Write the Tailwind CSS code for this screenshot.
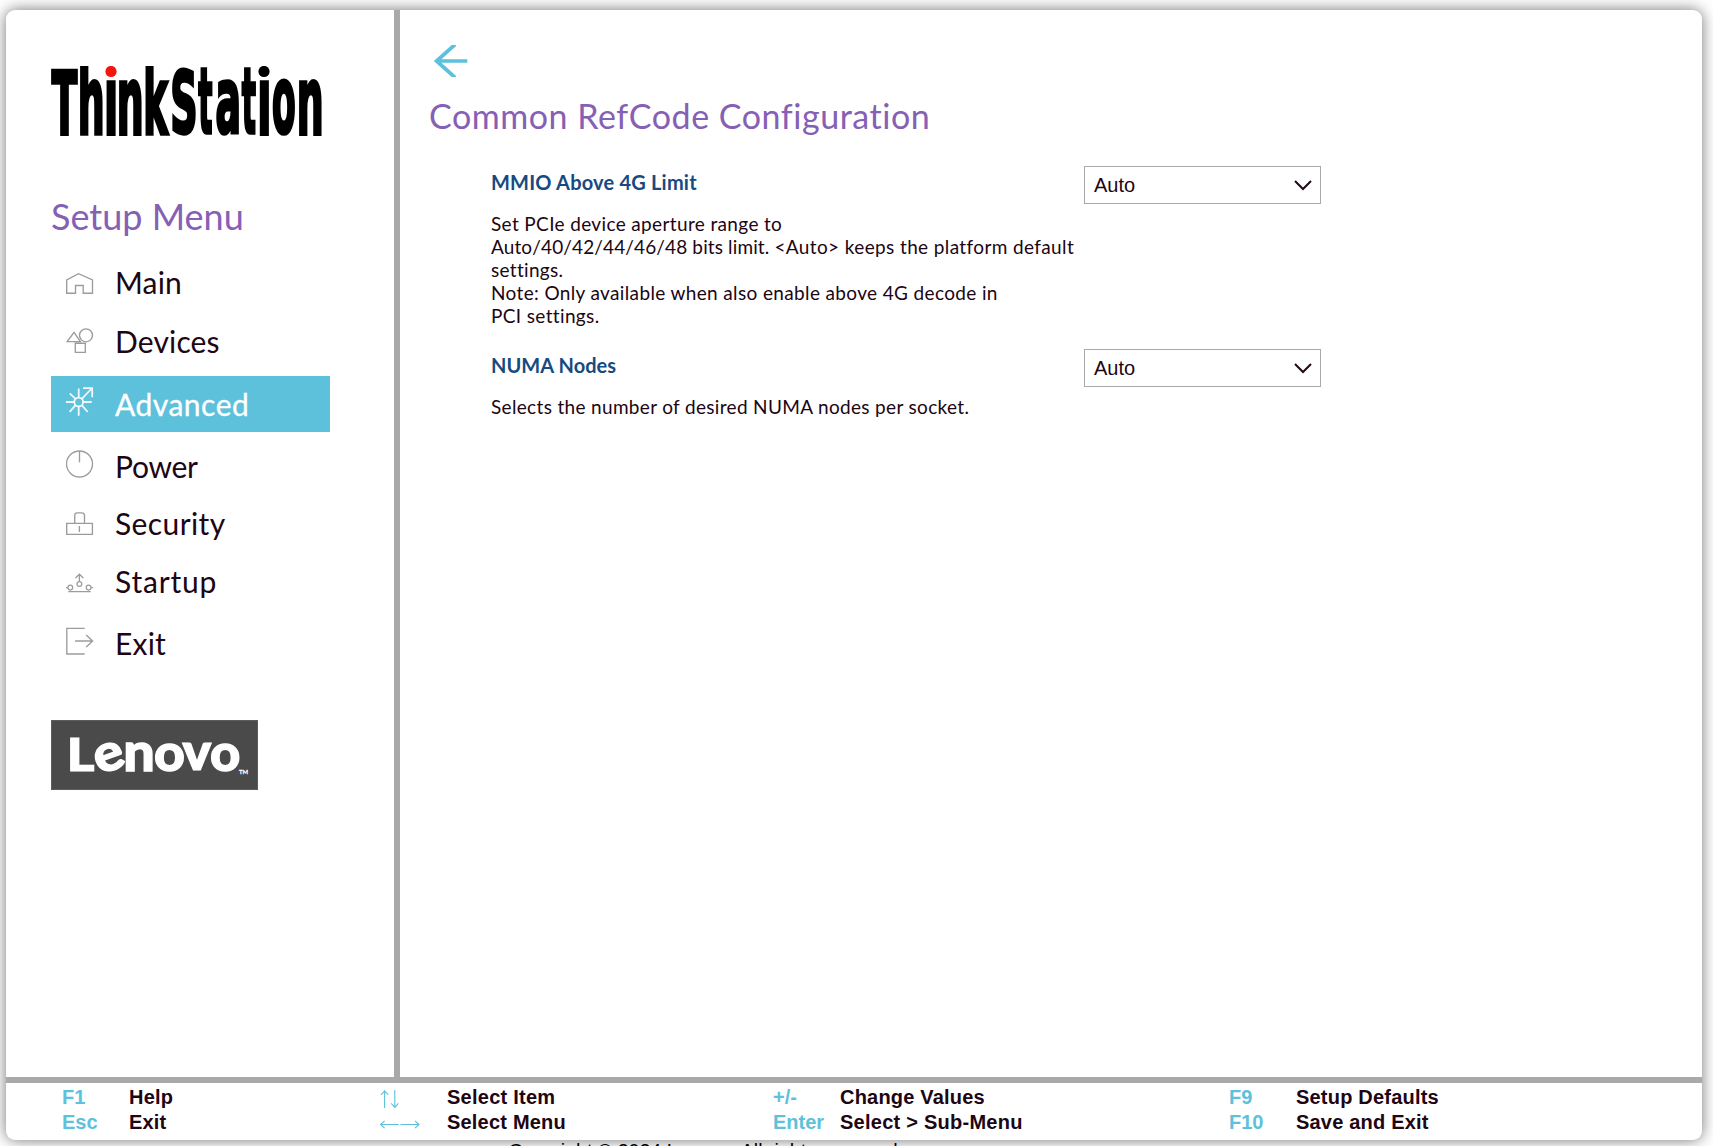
<!DOCTYPE html>
<html lang="en">
<head>
<meta charset="utf-8">
<title>ThinkStation Setup</title>
<script src="https://cdn.jsdelivr.net/npm/@tailwindcss/browser@4"></script>
</head>
<body class="h-[1146px] overflow-hidden bg-white pt-[10px] pl-[6px] font-['Lato',sans-serif] text-[#200512]">
<div class="flex h-[1130px] w-[1696px] flex-col overflow-hidden rounded-[9px] bg-white shadow-[0_0_15px_rgba(0,0,0,0.55)]">
  <div class="flex h-[1067px]">
    <aside class="w-[394px] border-r-[6px] border-[#a9a9a9] pt-[56px] pl-[45px]">
      <!-- ThinkStation wordmark -->
      <svg class="block h-[70px] w-[272px] font-['DejaVu_Sans_Condensed','DejaVu_Sans',sans-serif] text-[100px] font-bold" viewBox="51 66 272 70" fill="#000" stroke="#000" stroke-width="4" role="img" aria-label="ThinkStation">
        <defs>
          <clipPath id="stem"><rect x="0" y="-57.5" width="60" height="70"/></clipPath>
        </defs>
        <text transform="translate(51.8 133.5) scale(.415 .88)">T</text>
        <text transform="translate(77.8 133.5) scale(.42 .94)">h</text>
        <text transform="translate(104 133.5) scale(.46 .94)" clip-path="url(#stem)">i</text>
        <text transform="translate(116.8 133.5) scale(.42 .94)">n</text>
        <text transform="translate(143.3 133.5) scale(.41 .94)">k</text>
        <text transform="translate(170.2 133) scale(.423 .86)">S</text>
        <text transform="translate(198.3 133.3) scale(.33 .9)">t</text>
        <text transform="translate(215.5 133.3) scale(.42 .93)">a</text>
        <text transform="translate(241.8 133.3) scale(.33 .9)">t</text>
        <text transform="translate(257.2 133.5) scale(.46 .94)" clip-path="url(#stem)">i</text>
        <text transform="translate(272.1 133.3) scale(.383 .93)">o</text>
        <text transform="translate(296.8 133.5) scale(.42 .94)">n</text>
        <circle cx="111" cy="71.5" r="5.6" fill="#f3160e" stroke="none"/>
        <circle cx="264" cy="71.5" r="5.6" stroke="none"/>
      </svg>

      <h2 class="mt-[58px] text-[36px] leading-[44px] text-[#8560b5]">Setup Menu</h2>

      <nav class="mt-[16px] w-[279px] text-[30px]">
        <a class="flex h-14 items-center pl-[15px]">
          <svg class="mr-[21px] h-14 w-7" viewBox="0 0 28 56" fill="none" stroke="#9c9c9c" stroke-width="1.35"><path d="M.7 39.2V26L12.5 19.7 26.5 26V39.2H17.2V31.5H9.5V39.2Z"/></svg>
          <span class="pt-px tracking-[.2px]">Main</span>
        </a>
        <a class="mt-[3px] flex h-14 items-center pl-[15px]">
          <svg class="mr-[21px] h-14 w-7" viewBox="0 0 28 56" fill="none" stroke="#9c9c9c" stroke-width="1.35"><path d="M8 19.3 1.2 28.6H14.4ZM9.3 30.2H19.3V39.3H9.3Z"/><circle cx="20" cy="22.3" r="6.5"/></svg>
          <span class="pt-px tracking-[.15px]">Devices</span>
        </a>
        <a class="mt-[7px] flex h-14 items-center bg-[#5ec1db] pl-[15px] text-white">
          <svg class="mr-[21px] h-14 w-7" viewBox="0 0 28 56" fill="none" stroke="#fff" stroke-opacity=".9" stroke-width="1.8"><circle cx="12.7" cy="26" r="4.4"/><path d="M0 26H8.3M17.1 26H25.7M12.7 12.5V21.6M12.7 30.4V39.7M3.7 17.3 9.6 22.9M3.7 35.8 9.6 29.1M15.8 29.1 21.7 36M15.8 22.9 26.2 12M17 12.1H26.2V21.3"/></svg>
          <span class="pt-px tracking-[.5px] [-webkit-text-stroke:.3px_white]">Advanced</span>
        </a>
        <a class="mt-[6px] flex h-14 items-center pl-[15px]">
          <svg class="mr-[21px] h-14 w-7" viewBox="0 0 28 56" fill="none" stroke="#9c9c9c" stroke-width="1.35"><circle cx="13.5" cy="26" r="13"/><path d="M13.5 13V24.3"/></svg>
          <span class="pt-px tracking-[-.3px]">Power</span>
        </a>
        <a class="mt-px flex h-14 items-center pl-[15px]">
          <svg class="mr-[21px] h-14 w-7" viewBox="0 0 28 56" fill="none" stroke="#9c9c9c" stroke-width="1.35"><path d="M.7 28.3H26.4V39.3H.7ZM8.7 28.3V20.5Q8.7 17.8 11.4 17.8H15.8Q18.5 17.8 18.5 20.5V28.3M13.4 31V37"/></svg>
          <span class="pt-px tracking-[.4px]">Security</span>
        </a>
        <a class="mt-[2px] flex h-14 items-center pl-[15px]">
          <svg class="mr-[21px] h-14 w-7" viewBox="0 0 28 56" fill="none" stroke="#9c9c9c" stroke-width="1.25"><path d="M13.4 28.5V21.5M9.5 25 13.4 21.2 17.3 25M0 34.6H1.8M25.2 34.6H27M2.3 38.6H24.7"/><circle cx="13.4" cy="31" r="2.4"/><circle cx="4.3" cy="34.6" r="2.4"/><circle cx="22.6" cy="34.6" r="2.4"/></svg>
          <span class="pt-px tracking-[.8px]">Startup</span>
        </a>
        <a class="mt-[6px] flex h-14 items-center pl-[15px]">
          <svg class="mr-[21px] h-14 w-7" viewBox="0 0 28 56" fill="none" stroke="#9c9c9c" stroke-width="1.35"><path d="M18.7 13.3H.8V39H18.7M9 26H26.3M20.2 19.9 26.6 26 20.2 32.1"/></svg>
          <span class="pt-px tracking-[.2px]">Exit</span>
        </a>
      </nav>

      <!-- Lenovo badge -->
      <svg class="mt-[49px] block h-[70px] w-[207px] border border-[#5c5c5c] bg-[#4a4a4a] font-['Lato',sans-serif] text-[100px] font-black" viewBox="52 721 205 68" fill="#fff" stroke="#fff" stroke-width="2.4" role="img" aria-label="Lenovo">
        <text transform="translate(66.8 771) scale(.53 .465)">L</text>
        <text transform="rotate(-20 108.5 757.5) translate(94 770.9) scale(.558 .522)">e</text>
        <text transform="translate(123.2 770.6) scale(.557 .525)">n</text>
        <text transform="translate(154 770.9) scale(.535 .522)">o</text>
        <text transform="translate(182.6 770.4) scale(.54 .52)">v</text>
        <text transform="translate(210 770.9) scale(.526 .522)">o</text>
        <text class="text-[6px] font-normal" x="239" y="773.7" stroke-width=".3">TM</text>
      </svg>
    </aside>

    <main class="flex-1 pt-[35px] pl-[29px]">
      <svg class="ml-[5px] block h-8 w-9" viewBox="0 0 36 32" fill="none" stroke="#5ec1db" stroke-width="3.7"><path d="M21 -.5 2.6 16 21 32.5M2.6 16H33.3"/></svg>
      <h1 class="mt-[17px] text-[34px] leading-[44px] tracking-[.54px] text-[#8560b5]">Common RefCode Configuration</h1>

      <section class="mt-[28px] ml-[62px] flex">
        <div class="w-[593px]">
          <h3 class="pt-px text-[20px] leading-[30px] font-bold tracking-[.2px] text-[#174a80]">MMIO Above 4G Limit</h3>
          <p class="mt-[15px] text-[19px] leading-[23px] whitespace-nowrap"><span class="tracking-[.36px]">Set PCIe device aperture range to</span><br><span class="tracking-[.13px]">Auto/40/42/44/46/48 bits limit. </span><span class="tracking-[.38px]">&lt;Auto&gt; keeps the platform default</span><br><span class="tracking-[.3px]">settings.</span><br><span class="tracking-[.36px]">Note: Only available when also enable above 4G decode in</span><br><span class="tracking-[.36px]">PCI settings.</span></p>
        </div>
        <div class="flex h-[38px] w-[237px] items-center justify-between border border-[#a9a9a9] pr-[8px] pl-[9px] font-['Liberation_Sans',sans-serif] text-[20px]">
          <span>Auto</span>
          <svg class="h-3 w-[18px]" viewBox="0 0 18 12" fill="none" stroke="#200a18" stroke-width="2"><path d="M1 2 9 10 17 2"/></svg>
        </div>
      </section>

      <section class="mt-[22px] ml-[62px] flex">
        <div class="w-[593px]">
          <h3 class="pt-px text-[20px] leading-[30px] font-bold tracking-[.05px] text-[#174a80]">NUMA Nodes</h3>
          <p class="mt-[15px] text-[19px] leading-[23px] tracking-[.33px]">Selects the number of desired NUMA nodes per socket.</p>
        </div>
        <div class="flex h-[38px] w-[237px] items-center justify-between border border-[#a9a9a9] pr-[8px] pl-[9px] font-['Liberation_Sans',sans-serif] text-[20px]">
          <span>Auto</span>
          <svg class="h-3 w-[18px]" viewBox="0 0 18 12" fill="none" stroke="#200a18" stroke-width="2"><path d="M1 2 9 10 17 2"/></svg>
        </div>
      </section>
    </main>
  </div>

  <footer class="grid flex-1 auto-rows-[25px] grid-cols-[67px_251px_67px_326px_67px_389px_67px_1fr] border-t-[6px] border-[#a9a9a9] pt-[2px] pl-[56px] font-['Liberation_Sans',sans-serif] text-[20px] leading-[25px] font-bold whitespace-nowrap">
    <span class="text-[#5ec1db]">F1</span><span class="tracking-[.2px]">Help</span>
    <svg class="h-[25px] w-[42px]" viewBox="0 0 42 25" fill="none" stroke="#5ec1db" stroke-width="1.1"><path d="M4.6 23V6M1 9.8 4.6 5.8 8.2 9.8M14.8 5V22M11.2 18.4 14.8 22.4 18.4 18.4"/></svg>
    <span class="tracking-[.25px]">Select Item</span>
    <span class="text-[#5ec1db]">+/-</span><span class="tracking-[.2px]">Change Values</span>
    <span class="text-[#5ec1db]">F9</span><span class="tracking-[.2px]">Setup Defaults</span>
    <span class="text-[#5ec1db]">Esc</span><span class="tracking-[.2px]">Exit</span>
    <svg class="h-[25px] w-[42px]" viewBox="0 0 42 25" fill="none" stroke="#5ec1db" stroke-width="1.1"><path d="M.8 14.5H18.8M4.6 10.9.6 14.5 4.6 18.1M20.5 14.5H38.8M35 10.9 39 14.5 35 18.1"/></svg>
    <span class="tracking-[.2px]">Select Menu</span>
    <span class="text-[#5ec1db]">Enter</span><span class="tracking-[.25px]">Select &gt; Sub-Menu</span>
    <span class="text-[#5ec1db]">F10</span><span class="tracking-[.2px]">Save and Exit</span>
  </footer>
</div>
<p class="-mt-px pl-[502.5px] font-['Liberation_Sans',sans-serif] text-[19.6px] leading-6 text-black">Copyright © 2024 Lenovo. All rights reserved.</p>
</body>
</html>
